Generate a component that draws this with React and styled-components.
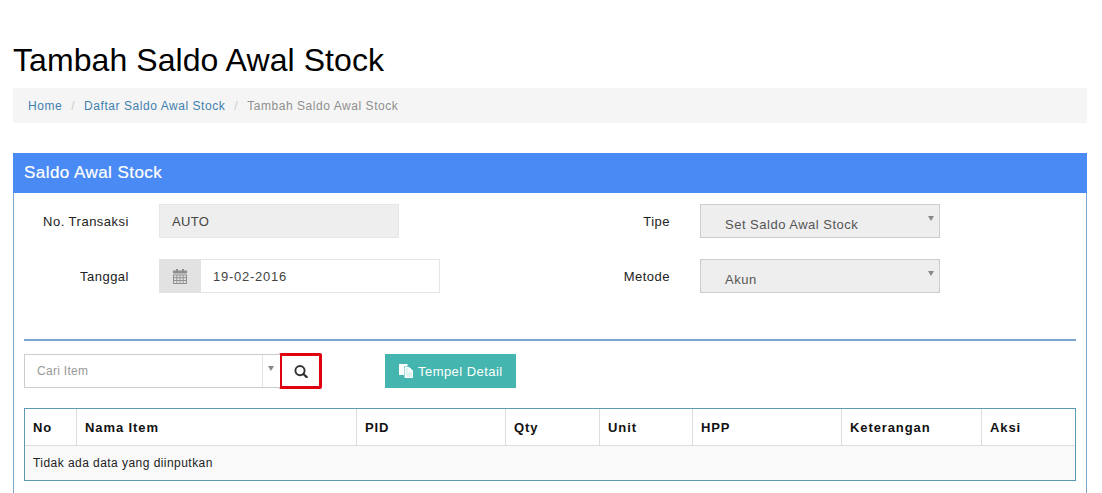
import React from "react";
import styled, { createGlobalStyle } from "styled-components";

const Global = createGlobalStyle`
  html, body { margin: 0; padding: 0; background: #fff; }
  body { font-family: "Liberation Sans", Arial, sans-serif; color: #333; overflow: hidden; }
`;

const Page = styled.div`
  width: 1074px;
  height: 493px;
  padding: 0 15px 0 13px;
  overflow: hidden;
`;

const Title = styled.h1`
  margin: 0;
  padding-top: 41px;
  height: 47px;
  font-size: 32px;
  line-height: 38px;
  font-weight: 400;
  letter-spacing: 0.07px;
  color: #000;
`;

const Breadcrumb = styled.nav`
  display: flex;
  align-items: center;
  height: 35px;
  padding-left: 15px;
  background: #f5f5f5;
  font-size: 12px;
  letter-spacing: 0.55px;
`;

const Crumb = styled.a`
  color: ${(p) => (p.$active ? "#8f8f8f" : "#3f7fae")};
`;

const Slash = styled.span`
  color: #ccc;
  padding: 0 9px;
`;

const Panel = styled.section`
  margin-top: 30px;
  height: 340px;
  border: 1px solid #7ba6d0;
  border-bottom: none;
  box-sizing: border-box;
`;

const PanelHeading = styled.header`
  display: flex;
  align-items: center;
  height: 40px;
  margin: -1px -1px 0;
  padding-left: 11px;
  background: #4a8af4;
  color: #fff;
  font-size: 17px;
  letter-spacing: 0.45px;
  -webkit-text-stroke: 0.2px #fff;
`;

const Body = styled.div`
  padding: 11px 10px 0;
`;

const FormGrid = styled.div`
  display: grid;
  grid-template-columns: 541px 1fr;
  grid-auto-rows: 34px;
  align-content: start;
  row-gap: 21px;
  height: 135px;
  border-bottom: 2px solid #7ba6d0;
`;

const Field = styled.div`
  display: flex;
  align-items: center;
  height: 34px;
`;

const Label = styled.label`
  width: 105px;
  margin-right: 30px;
  flex: none;
  text-align: right;
  font-size: 13px;
  letter-spacing: 0.5px;
  color: #222;
`;

const ReadOnly = styled.div`
  width: 240px;
  height: 34px;
  box-sizing: border-box;
  display: flex;
  align-items: center;
  padding-left: 12px;
  background: #eee;
  border: 1px solid #e6e6e6;
  font-size: 13px;
  letter-spacing: 0.35px;
  color: #444;
`;

const DateGroup = styled.div`
  display: flex;
  width: 281px;
  height: 34px;
  box-sizing: border-box;
  border: 1px solid #e5e5e5;
`;

const Addon = styled.span`
  display: flex;
  align-items: center;
  justify-content: center;
  width: 42px;
  margin: -1px 0 -1px -1px;
  background: #e2e2e2;
  color: #8f8f8f;
`;

const DateValue = styled.span`
  display: flex;
  align-items: center;
  padding-left: 12px;
  font-size: 13px;
  letter-spacing: 0.75px;
  color: #444;
`;

const SelectBox = styled.div`
  position: relative;
  width: 240px;
  height: 34px;
  box-sizing: border-box;
  padding: 12px 0 0 24px;
  background: #eee;
  border: 1px solid #ccc;
  font-size: 13px;
  line-height: 15px;
  letter-spacing: 0.5px;
  color: #555;
`;

const Caret = styled.i`
  position: absolute;
  top: 11px;
  right: ${(p) => p.$right}px;
  width: 0;
  height: 0;
  border-left: 3.5px solid transparent;
  border-right: 3.5px solid transparent;
  border-top: 5px solid #888;
`;

const Toolbar = styled.div`
  display: flex;
  align-items: center;
  height: 34px;
  margin-top: 13px;
`;

const Combo = styled.div`
  position: relative;
  display: flex;
  align-items: center;
  width: 256px;
  height: 34px;
  box-sizing: border-box;
  padding-left: 12px;
  background: #fff;
  border: 1px solid #ccc;
  border-right: none;
  font-size: 12px;
  letter-spacing: 0.3px;
  color: #999;
`;

const ComboDivider = styled.span`
  position: absolute;
  top: 0;
  bottom: 0;
  right: 17px;
  width: 1px;
  background: #e4e4e4;
`;

const SearchButton = styled.button`
  display: flex;
  align-items: center;
  justify-content: center;
  width: 43px;
  height: 36px;
  margin-left: -1px;
  padding: 0;
  box-sizing: border-box;
  background: #fff;
  border: 3px solid #e0000f;
  border-radius: 2px;
  color: #333;
`;

const PasteButton = styled.button`
  display: flex;
  align-items: center;
  gap: 4px;
  width: 131px;
  height: 34px;
  margin-left: 63px;
  padding: 0 0 0 14px;
  box-sizing: border-box;
  background: #45b6af;
  border: none;
  color: #fff;
  font: 13px "Liberation Sans", Arial, sans-serif;
  letter-spacing: 0.45px;
`;

const Table = styled.table`
  width: 1052px;
  margin-top: 20px;
  table-layout: fixed;
  border-collapse: separate;
  border-spacing: 0;
  border: 1px solid #5a9ab5;
`;

const Th = styled.th`
  height: 37px;
  padding: 0 0 0 8px;
  box-sizing: border-box;
  text-align: left;
  font-size: 13px;
  font-weight: 700;
  letter-spacing: 0.9px;
  color: #111;
  border-bottom: 1px solid #ddd;
  border-right: 1px solid #ddd;
  &:last-child { border-right: none; }
`;

const Td = styled.td`
  height: 34px;
  padding: 0 0 0 8px;
  box-sizing: border-box;
  background: #f9f9f9;
  font-size: 12px;
  letter-spacing: 0.45px;
  color: #222;
`;

const columns = [
  ["No", 52],
  ["Nama Item", 280],
  ["PID", 149],
  ["Qty", 94],
  ["Unit", 93],
  ["HPP", 149],
  ["Keterangan", 140],
  ["Aksi", 93],
];

function CalendarIcon() {
  return (
    <svg width="14" height="15" viewBox="0 0 14 15" fill="currentColor">
      <path d="M3 0h2v2H3zM9 0h2v2H9z" />
      <path d="M0 1.5h14V4.5H0z" />
      <path fillRule="evenodd" d="M0 5.5h14V15H0zM1 6.5v1.8h2.4V6.5zm3.3 0v1.8h2.3V6.5zm3.1 0v1.8h2.3V6.5zm3.2 0v1.8H13V6.5zM1 9.2v1.8h2.4V9.2zm3.3 0v1.8h2.3V9.2zm3.1 0v1.8h2.3V9.2zm3.2 0v1.8H13V9.2zM1 11.9V14h2.4v-2.1zm3.3 0V14h2.3v-2.1zm3.1 0V14h2.3v-2.1zm3.2 0V14H13v-2.1z" />
    </svg>
  );
}

function SearchIcon() {
  return (
    <svg width="14" height="13" viewBox="0 0 14 13" fill="none" stroke="currentColor">
      <circle cx="6" cy="5.6" r="4.6" strokeWidth="1.9" />
      <path d="M9.4 9l3.3 3.1" strokeWidth="2.3" strokeLinecap="round" />
    </svg>
  );
}

function PasteIcon() {
  return (
    <svg width="15" height="14" viewBox="0 0 15 14">
      <path fill="#fff" d="M0 0h8.5v2.5H5V11H0z" />
      <path fill="#dff3f1" stroke="#fff" d="M6 3.5h4L13.5 7v6.5H6z" />
      <path fill="#fff" d="M9.5 3.5h1L14 7v1H9.5z" />
    </svg>
  );
}

export default function App() {
  return (
    <Page>
      <Global />
      <Title>Tambah Saldo Awal Stock</Title>
      <Breadcrumb>
        <Crumb>Home</Crumb>
        <Slash>/</Slash>
        <Crumb>Daftar Saldo Awal Stock</Crumb>
        <Slash>/</Slash>
        <Crumb $active>Tambah Saldo Awal Stock</Crumb>
      </Breadcrumb>
      <Panel>
        <PanelHeading>Saldo Awal Stock</PanelHeading>
        <Body>
          <FormGrid>
            <Field>
              <Label>No. Transaksi</Label>
              <ReadOnly>AUTO</ReadOnly>
            </Field>
            <Field>
              <Label>Tipe</Label>
              <SelectBox>
                Set Saldo Awal Stock
                <Caret $right={5} />
              </SelectBox>
            </Field>
            <Field>
              <Label>Tanggal</Label>
              <DateGroup>
                <Addon><CalendarIcon /></Addon>
                <DateValue>19-02-2016</DateValue>
              </DateGroup>
            </Field>
            <Field>
              <Label>Metode</Label>
              <SelectBox>
                Akun
                <Caret $right={5} />
              </SelectBox>
            </Field>
          </FormGrid>
          <Toolbar>
            <Combo>
              Cari Item
              <ComboDivider />
              <Caret $right={6} />
            </Combo>
            <SearchButton aria-label="Cari"><SearchIcon /></SearchButton>
            <PasteButton><PasteIcon />Tempel Detail</PasteButton>
          </Toolbar>
          <Table>
            <colgroup>
              {columns.map(([name, w]) => <col key={name} width={w} />)}
            </colgroup>
            <thead>
              <tr>
                {columns.map(([name]) => <Th key={name}>{name}</Th>)}
              </tr>
            </thead>
            <tbody>
              <tr>
                <Td colSpan={8}>Tidak ada data yang diinputkan</Td>
              </tr>
            </tbody>
          </Table>
        </Body>
      </Panel>
    </Page>
  );
}
